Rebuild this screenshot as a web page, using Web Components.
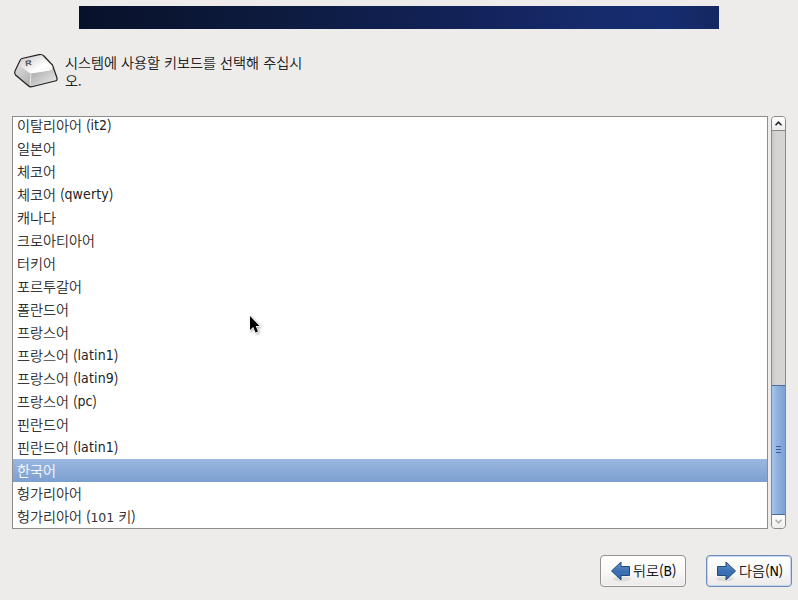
<!DOCTYPE html>
<html lang="ko">
<head>
<meta charset="utf-8">
<title>키보드 선택</title>
<style>
html,body{margin:0;width:798px;height:600px;overflow:hidden;background:#edeceb}
body{font-family:"Noto Sans CJK KR","DejaVu Sans",sans-serif;font-size:14.13px;font-weight:300;color:#111;-webkit-text-stroke:.2px currentColor}
.digits{font-family:"DejaVu Sans",sans-serif;font-size:12.5px;font-weight:400;line-height:1;color:#333;-webkit-text-stroke:0}
</style>
</head>
<body>
<installer-screen>
  <top-banner slot="banner"></top-banner>
  <screen-prompt slot="prompt">시스템에 사용할 키보드를 선택해 주십시<br>오.</screen-prompt>
  <choice-list slot="list">
    <choice-item latin="it2">이탈리아어</choice-item>
    <choice-item>일본어</choice-item>
    <choice-item>체코어</choice-item>
    <choice-item latin="qwerty">체코어</choice-item>
    <choice-item>캐나다</choice-item>
    <choice-item>크로아티아어</choice-item>
    <choice-item>터키어</choice-item>
    <choice-item>포르투갈어</choice-item>
    <choice-item>폴란드어</choice-item>
    <choice-item>프랑스어</choice-item>
    <choice-item latin="latin1">프랑스어</choice-item>
    <choice-item latin="latin9">프랑스어</choice-item>
    <choice-item latin="pc">프랑스어</choice-item>
    <choice-item>핀란드어</choice-item>
    <choice-item latin="latin1">핀란드어</choice-item>
    <choice-item selected>한국어</choice-item>
    <choice-item>헝가리아어</choice-item>
    <choice-item>헝가리아어 (<span class="digits">101</span> 키)</choice-item>
  </choice-list>
  <scroll-bar slot="list"></scroll-bar>
  <nav-button slot="actions" direction="back" key="B">뒤로</nav-button>
  <nav-button slot="actions" direction="next" key="N">다음</nav-button>
</installer-screen>
<mouse-pointer></mouse-pointer>
<script>
const define = (name, markup, setup) => customElements.define(name, class extends HTMLElement {
  connectedCallback() {
    if (this.shadowRoot) return;
    const root = this.attachShadow({ mode: 'open' });
    const t = document.createElement('template');
    t.innerHTML = markup;
    root.append(t.content.cloneNode(true));
    if (setup) setup(this, root);
  }
});

define('installer-screen', `
<style>
:host{display:flex;flex-direction:column;box-sizing:border-box;width:798px;height:600px;padding-top:6px;background:#edeceb}
.banner{display:flex;justify-content:center;height:23px}
.prompt{height:87px}
.list{display:flex;gap:3px;height:413px;padding:0 12px}
.actions{display:flex;justify-content:flex-end;gap:20px;padding:26px 6px 0 0}
</style>
<div class="banner"><slot name="banner"></slot></div>
<div class="prompt"><slot name="prompt"></slot></div>
<div class="list"><slot name="list"></slot></div>
<div class="actions"><slot name="actions"></slot></div>`);

define('top-banner', `<style>:host{display:block;width:640px;height:23px;background:linear-gradient(92deg,#08112a 0%,#0b1633 15%,#0e1d45 38%,#13235b 62%,#162b6b 80%,#162c70 92%,#15275f 100%)}</style>`);

define('screen-prompt', `
<style>
:host{display:flex;padding:24px 0 0 13px}
svg{width:46px;height:38px;flex:none}
p{margin:1px 0 0 6px;line-height:17.5px;color:#000;white-space:nowrap;word-spacing:.1px}
</style>
<svg viewBox="0 0 46 38">
<defs><linearGradient id="top" x1="0" y1="0" x2="1" y2="1"><stop offset="0" stop-color="#c4c4c4"/><stop offset=".65" stop-color="#fff"/><stop offset="1" stop-color="#eee"/></linearGradient>
<linearGradient id="left" x1="0" y1="0" x2="1" y2="1"><stop offset="0" stop-color="#eee"/><stop offset="1" stop-color="#8e8e8e"/></linearGradient>
<linearGradient id="front" x1="0" y1="0" x2="1" y2="1"><stop offset="0" stop-color="#a2a2a2"/><stop offset="1" stop-color="#f0f0f0"/></linearGradient></defs>
<path d="M9 5.500 26 1.700Q29 1 31 3L39.500 12 44 25Q44.500 27.500 42 28L20 33.500Q17 34.500 15 32.500L2.500 22Q1 20 2 18L7 7.500Q7.500 6 9 5.500Z" fill="url(#left)"/>
<path d="M9 5.500 28 2 40 13.500Q40 17 36 18L21 20.500Q18 21 16 19.500L6 12Z" fill="url(#top)"/>
<path d="M18 20.500 36 18Q39.500 17 40 14L44 25Q44.500 27.500 42 28L17 34Z" fill="url(#front)"/>
<path d="M18 20.500 17 33" stroke="#f2f2f2" stroke-width=".8"/>
<path d="M9 5.500 26 1.700Q29 1 31 3L39.500 12 44 25Q44.500 27.500 42 28L20 33.500Q17 34.500 15 32.500L2.500 22Q1 20 2 18L7 7.500Q7.500 6 9 5.500Z" fill="none" stroke="#222" stroke-width="1.200"/>
<text font-family="Liberation Sans,sans-serif" font-size="9" font-weight="700" fill="#555" transform="matrix(1 -.25 .1 .85 12.500 13.500)">R</text>
</svg><p><slot></slot></p>`);

define('choice-list', `<style>:host{display:flex;flex-direction:column;justify-content:flex-end;box-sizing:border-box;width:756px;height:413px;border:1px solid #8f8d8b;background:#fff;overflow:hidden}</style><slot></slot>`);

define('choice-item', `
<style>
:host{display:block;flex:none;box-sizing:border-box;height:23px;line-height:22px;padding-left:4px;white-space:nowrap}
:host([selected]){color:#fff;background:linear-gradient(#9ab8e0,#7b9fd0)}
.latin{vertical-align:1px;font-family:"DejaVu Sans Condensed","DejaVu Sans",sans-serif;font-stretch:condensed;font-size:14px;letter-spacing:.15px;font-weight:400;line-height:1;color:#222;-webkit-text-stroke:0}
</style><slot></slot>`, (host, root) => {
  if (host.hasAttribute('latin')) {
    const s = document.createElement('span');
    s.className = 'latin';
    s.textContent = host.getAttribute('latin');
    root.append(' (', s, ')');
  }
});

define('scroll-bar', `
<style>
:host{display:flex;flex-direction:column;box-sizing:border-box;width:15px;height:413px;border:1px solid #8a8785;border-radius:4px;overflow:hidden;background:#d3d1cf}
.end{height:13px;display:flex;align-items:center;justify-content:center;background:linear-gradient(#fff,#ededec)}
.up{border-bottom:1px solid #8a8785}
.track{flex:1;background:linear-gradient(90deg,#c9c7c5,#d6d4d2 30%)}
.thumb{box-sizing:border-box;height:130px;margin:0 -1px;border:1px solid #4c6c9c;background:linear-gradient(90deg,#a9c6ec,#8fb2e0 40%,#7ba0d2);display:flex;flex-direction:column;gap:2px;align-items:center;justify-content:center;padding-bottom:2px}
i{width:5px;height:1px;background:#3c5f94}
svg{width:7px;height:5px;fill:none;stroke:#222;stroke-width:1.500}
.down svg{stroke:#aaa}
</style>
<div class="end up"><svg viewBox="0 0 7 5"><path d="M.5 4.300 3.500 1.200 6.500 4.300"/></svg></div>
<div class="track"></div>
<div class="thumb"><i></i><i></i><i></i></div>
<div class="end down"><svg viewBox="0 0 7 5"><path d="M.5 .7 3.500 3.800 6.500 .7"/></svg></div>`);

define('nav-button', `
<style>
:host{display:flex;box-sizing:border-box;width:86px;height:32px;border:1px solid #94918e;border-radius:4px;align-items:center;padding-left:9px;background:linear-gradient(#fff,#f8f8f7 50%,#eceae8);color:#000;box-shadow:inset 0 0 0 1px #fff8;line-height:20px;white-space:nowrap}
:host([direction=next]){border-color:#6c8dbb;box-shadow:inset 0 0 0 1px #c4d5ed}
svg{width:22px;height:24px;flex:none;margin-right:1px}
:host([direction=next]) svg{transform:scaleX(-1);margin:0 2px 0 -1px}
.key{font-family:"DejaVu Sans Condensed","DejaVu Sans",sans-serif;font-stretch:condensed;font-size:14px;font-weight:400;line-height:1;-webkit-text-stroke:0}
span:not(.key){margin-top:-3px}
</style>
<svg viewBox="0 0 22 24"><defs><linearGradient id="a" x2="0" y2="1"><stop stop-color="#6595cf"/><stop offset=".5" stop-color="#3c70b4"/><stop offset="1" stop-color="#326aad"/></linearGradient></defs>
<ellipse cx="12" cy="20" rx="9" ry="2.500" fill="#000" opacity=".08"/>
<path d="M1.500 12 11 3V7.500H19.500V16.500H11V21Z" fill="url(#a)" stroke="#234878" stroke-linejoin="round"/></svg>
<span><slot></slot>(<span class="key"></span>)</span>`, (host, root) => {
  root.querySelector('.key').textContent = host.getAttribute('key');
});

define('mouse-pointer', `
<style>:host{position:absolute;left:247px;top:313px;width:16px;height:22px}svg{display:block;filter:drop-shadow(1px 1px 1px #0005)}</style>
<svg width="16" height="22" viewBox="0 0 16 22"><path d="M3 3V17L6.200 14 8.500 19.500 11 18.500 8.700 13H12.500Z" fill="#000" stroke="#fff" stroke-width="1.500" paint-order="stroke"/></svg>`);
</script>
</body>
</html>
